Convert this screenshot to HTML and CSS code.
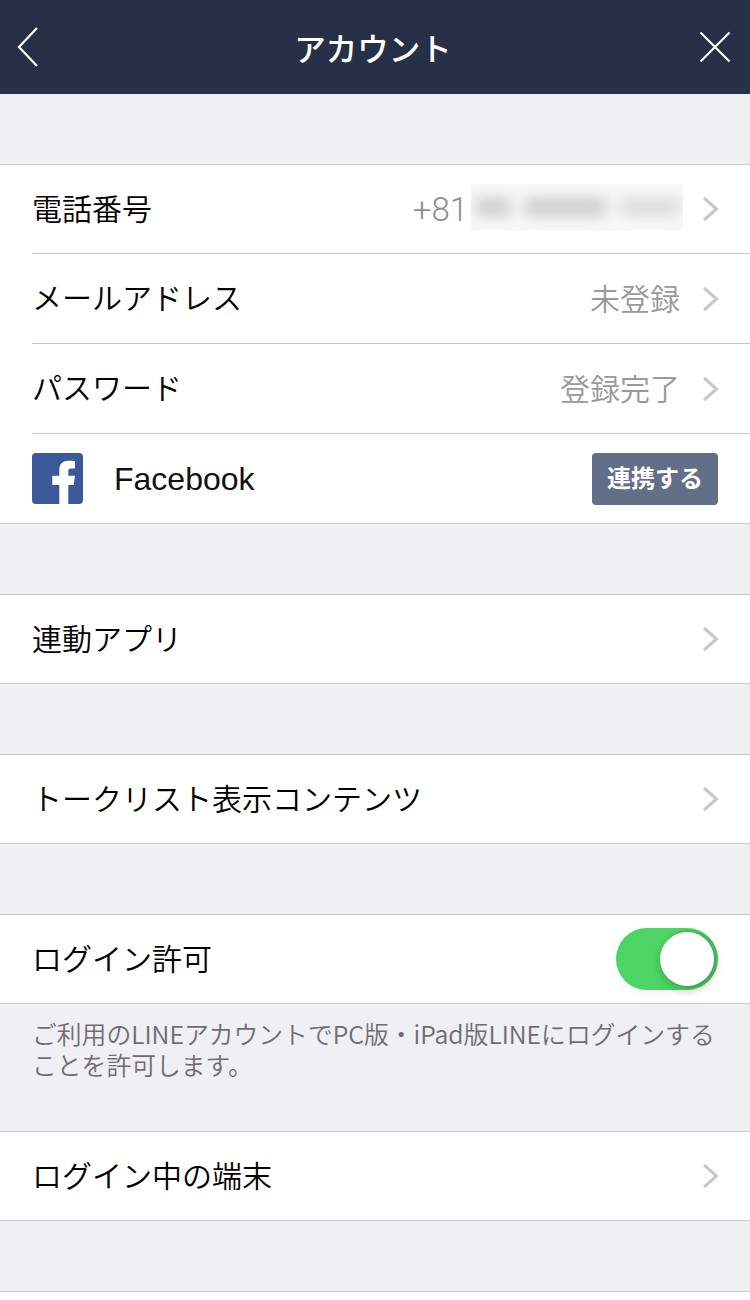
FILE: index.html
```html
<!DOCTYPE html>
<html lang="ja">
<head>
    <meta charset="UTF-8">
    <meta name="viewport" content="width=device-width, initial-scale=1.0">
    <title>アカウント</title>
    <link rel="stylesheet" href="styles.css">
</head>
<body>
    <header class="topbar">
        <svg class="topbar-icon" width="24" height="42" viewBox="0 0 24 42">
            <path d="M21 2 L3 21 L21 40" fill="none" stroke="#fff" stroke-width="2.2"/>
        </svg>
        <h1 class="topbar-title">アカウント</h1>
        <svg class="topbar-icon" width="32" height="32" viewBox="0 0 32 32">
            <path d="M1.5 1.5 L30.5 30.5 M30.5 1.5 L1.5 30.5" fill="none" stroke="#fff" stroke-width="2.1"/>
        </svg>
    </header>

    <main class="content">
        <section class="section">
            <div class="row">
                <span class="row-label">電話番号</span>
                <span class="row-value row-value-phone">+81</span>
                <div class="phone-mask">
                    <i class="blob blob-a"></i>
                    <i class="blob blob-b"></i>
                    <i class="blob blob-c"></i>
                </div>
                <svg class="chevron chevron-phone" width="17" height="26" viewBox="0 0 17 26"><path d="M2 2 L14.5 13 L2 24" fill="none" stroke="#c7c7cc" stroke-width="3"/></svg>
            </div>
            <div class="row">
                <span class="row-label">メールアドレス</span>
                <span class="row-value">未登録</span>
                <svg class="chevron" width="17" height="26" viewBox="0 0 17 26"><path d="M2 2 L14.5 13 L2 24" fill="none" stroke="#c7c7cc" stroke-width="3"/></svg>
            </div>
            <div class="row">
                <span class="row-label">パスワード</span>
                <span class="row-value">登録完了</span>
                <svg class="chevron" width="17" height="26" viewBox="0 0 17 26"><path d="M2 2 L14.5 13 L2 24" fill="none" stroke="#c7c7cc" stroke-width="3"/></svg>
            </div>
            <div class="row">
                <svg class="fb-logo" width="51" height="51" viewBox="0 0 51 51">
                    <rect width="51" height="51" rx="4" fill="#3b5998"/>
                    <path d="M27.3 51 V32 H20.3 V22.7 H27.3 V16.5 C27.3 10.5 31 7.7 36.5 7.7 C39.5 7.7 42 7.9 43 8 V15.5 H38.8 C36.8 15.5 36.3 16.7 36.3 18.3 V22.7 H42.9 L41.8 32 H36.3 V51 Z" fill="#fff"/>
                </svg>
                <span class="row-label fb-label">Facebook</span>
                <button class="link-btn">連携する</button>
            </div>
        </section>

        <section class="section">
            <div class="row">
                <span class="row-label">連動アプリ</span>
                <svg class="chevron" width="17" height="26" viewBox="0 0 17 26"><path d="M2 2 L14.5 13 L2 24" fill="none" stroke="#c7c7cc" stroke-width="3"/></svg>
            </div>
        </section>

        <section class="section">
            <div class="row">
                <span class="row-label">トークリスト表示コンテンツ</span>
                <svg class="chevron" width="17" height="26" viewBox="0 0 17 26"><path d="M2 2 L14.5 13 L2 24" fill="none" stroke="#c7c7cc" stroke-width="3"/></svg>
            </div>
        </section>

        <section class="section section-noted">
            <div class="row">
                <span class="row-label">ログイン許可</span>
                <div class="toggle"><div class="toggle-knob"></div></div>
            </div>
        </section>
        <p class="note">ご利用のLINEアカウントでPC版・iPad版LINEにログインすることを許可します。</p>

        <section class="section">
            <div class="row">
                <span class="row-label">ログイン中の端末</span>
                <svg class="chevron" width="17" height="26" viewBox="0 0 17 26"><path d="M2 2 L14.5 13 L2 24" fill="none" stroke="#c7c7cc" stroke-width="3"/></svg>
            </div>
        </section>

        <div class="section-end"></div>
    </main>
</body>
</html>
```

FILE: styles.css
```css
* {
    box-sizing: border-box;
}

html, body {
    margin: 0;
    padding: 0;
}

body {
    background: #efeff4;
    color: #000;
    font-family: "Liberation Sans", "Noto Sans CJK JP", sans-serif;
    font-size: 30px;
}

.topbar {
    height: 94px;
    background: #273047;
    display: flex;
    align-items: center;
    justify-content: space-between;
    padding: 0 19px 0 16px;
}

.topbar-title {
    margin: 0 0 0 7px;
    color: #fff;
    font-size: 31.5px;
    font-weight: 500;
}

.content {
    padding-top: 70px;
}

.section {
    background: #fff;
    border-top: 1px solid #c8c7cc;
    border-bottom: 1px solid #c8c7cc;
    margin-bottom: 70px;
}

.section-noted {
    margin-bottom: 0;
}

.row {
    height: 88px;
    margin-left: 32px;
    padding-right: 32px;
    display: flex;
    align-items: center;
}

.row + .row {
    height: 90px;
    border-top: 1px solid #c8c7cc;
}

.row-label {
    flex: 1;
    white-space: nowrap;
    padding-bottom: 5px;
    font-weight: 350;
}

.row-value {
    color: #999;
    margin-right: 22px;
    padding-bottom: 4px;
    font-weight: 350;
}

.row-value-phone {
    font-family: Roboto, sans-serif;
    font-size: 33px;
    font-weight: 300;
    color: #8e8e8e;
    margin-right: 3px;
    padding-bottom: 0;
}

.chevron {
    flex: none;
    margin-right: -1px;
}

.chevron-phone {
    margin-left: 19px;
}

.phone-mask {
    width: 212px;
    height: 47px;
    margin-bottom: 4px;
    background: #f9f9f9;
    display: flex;
    align-items: center;
    padding-left: 4px;
    overflow: hidden;
}

.blob {
    display: block;
    height: 20px;
    background: #d0d0d0;
    filter: blur(7px);
}

.blob-a {
    width: 36px;
}

.blob-b {
    width: 82px;
    margin-left: 13px;
}

.blob-c {
    width: 62px;
    margin-left: 13px;
    background: #dedede;
}

.fb-logo {
    flex: none;
    margin-right: 31px;
}

.fb-label {
    font-size: 32px;
    font-weight: 400;
    color: #111;
    padding: 2px 0 0;
}

.link-btn {
    width: 126px;
    height: 52px;
    padding: 0 0 4px;
    border: 0;
    border-radius: 4px;
    background: #636f88;
    color: #fff;
    font-family: inherit;
    font-size: 24px;
    font-weight: 700;
}

.toggle {
    width: 102px;
    height: 62px;
    border-radius: 31px;
    background: #4cd464;
    display: flex;
    align-items: center;
    justify-content: flex-end;
    padding-right: 4px;
    box-shadow: 0 3px 8px rgba(0, 0, 0, 0.05);
}

.toggle-knob {
    width: 54px;
    height: 54px;
    border-radius: 50%;
    background: #fff;
    box-shadow: 2px 0 0 2px rgba(50, 120, 80, 0.25), 0 4px 8px rgba(0, 0, 0, 0.18);
}

.note {
    margin: 0;
    height: 127px;
    padding: 14px 20px 0 32px;
    color: #6d6d72;
    font-family: "Noto Sans CJK JP", sans-serif;
    font-size: 24.8px;
    font-weight: 350;
    line-height: 31px;
}

.section-end {
    height: 9px;
    background: #fff;
    border-top: 1px solid #c8c7cc;
}
```
